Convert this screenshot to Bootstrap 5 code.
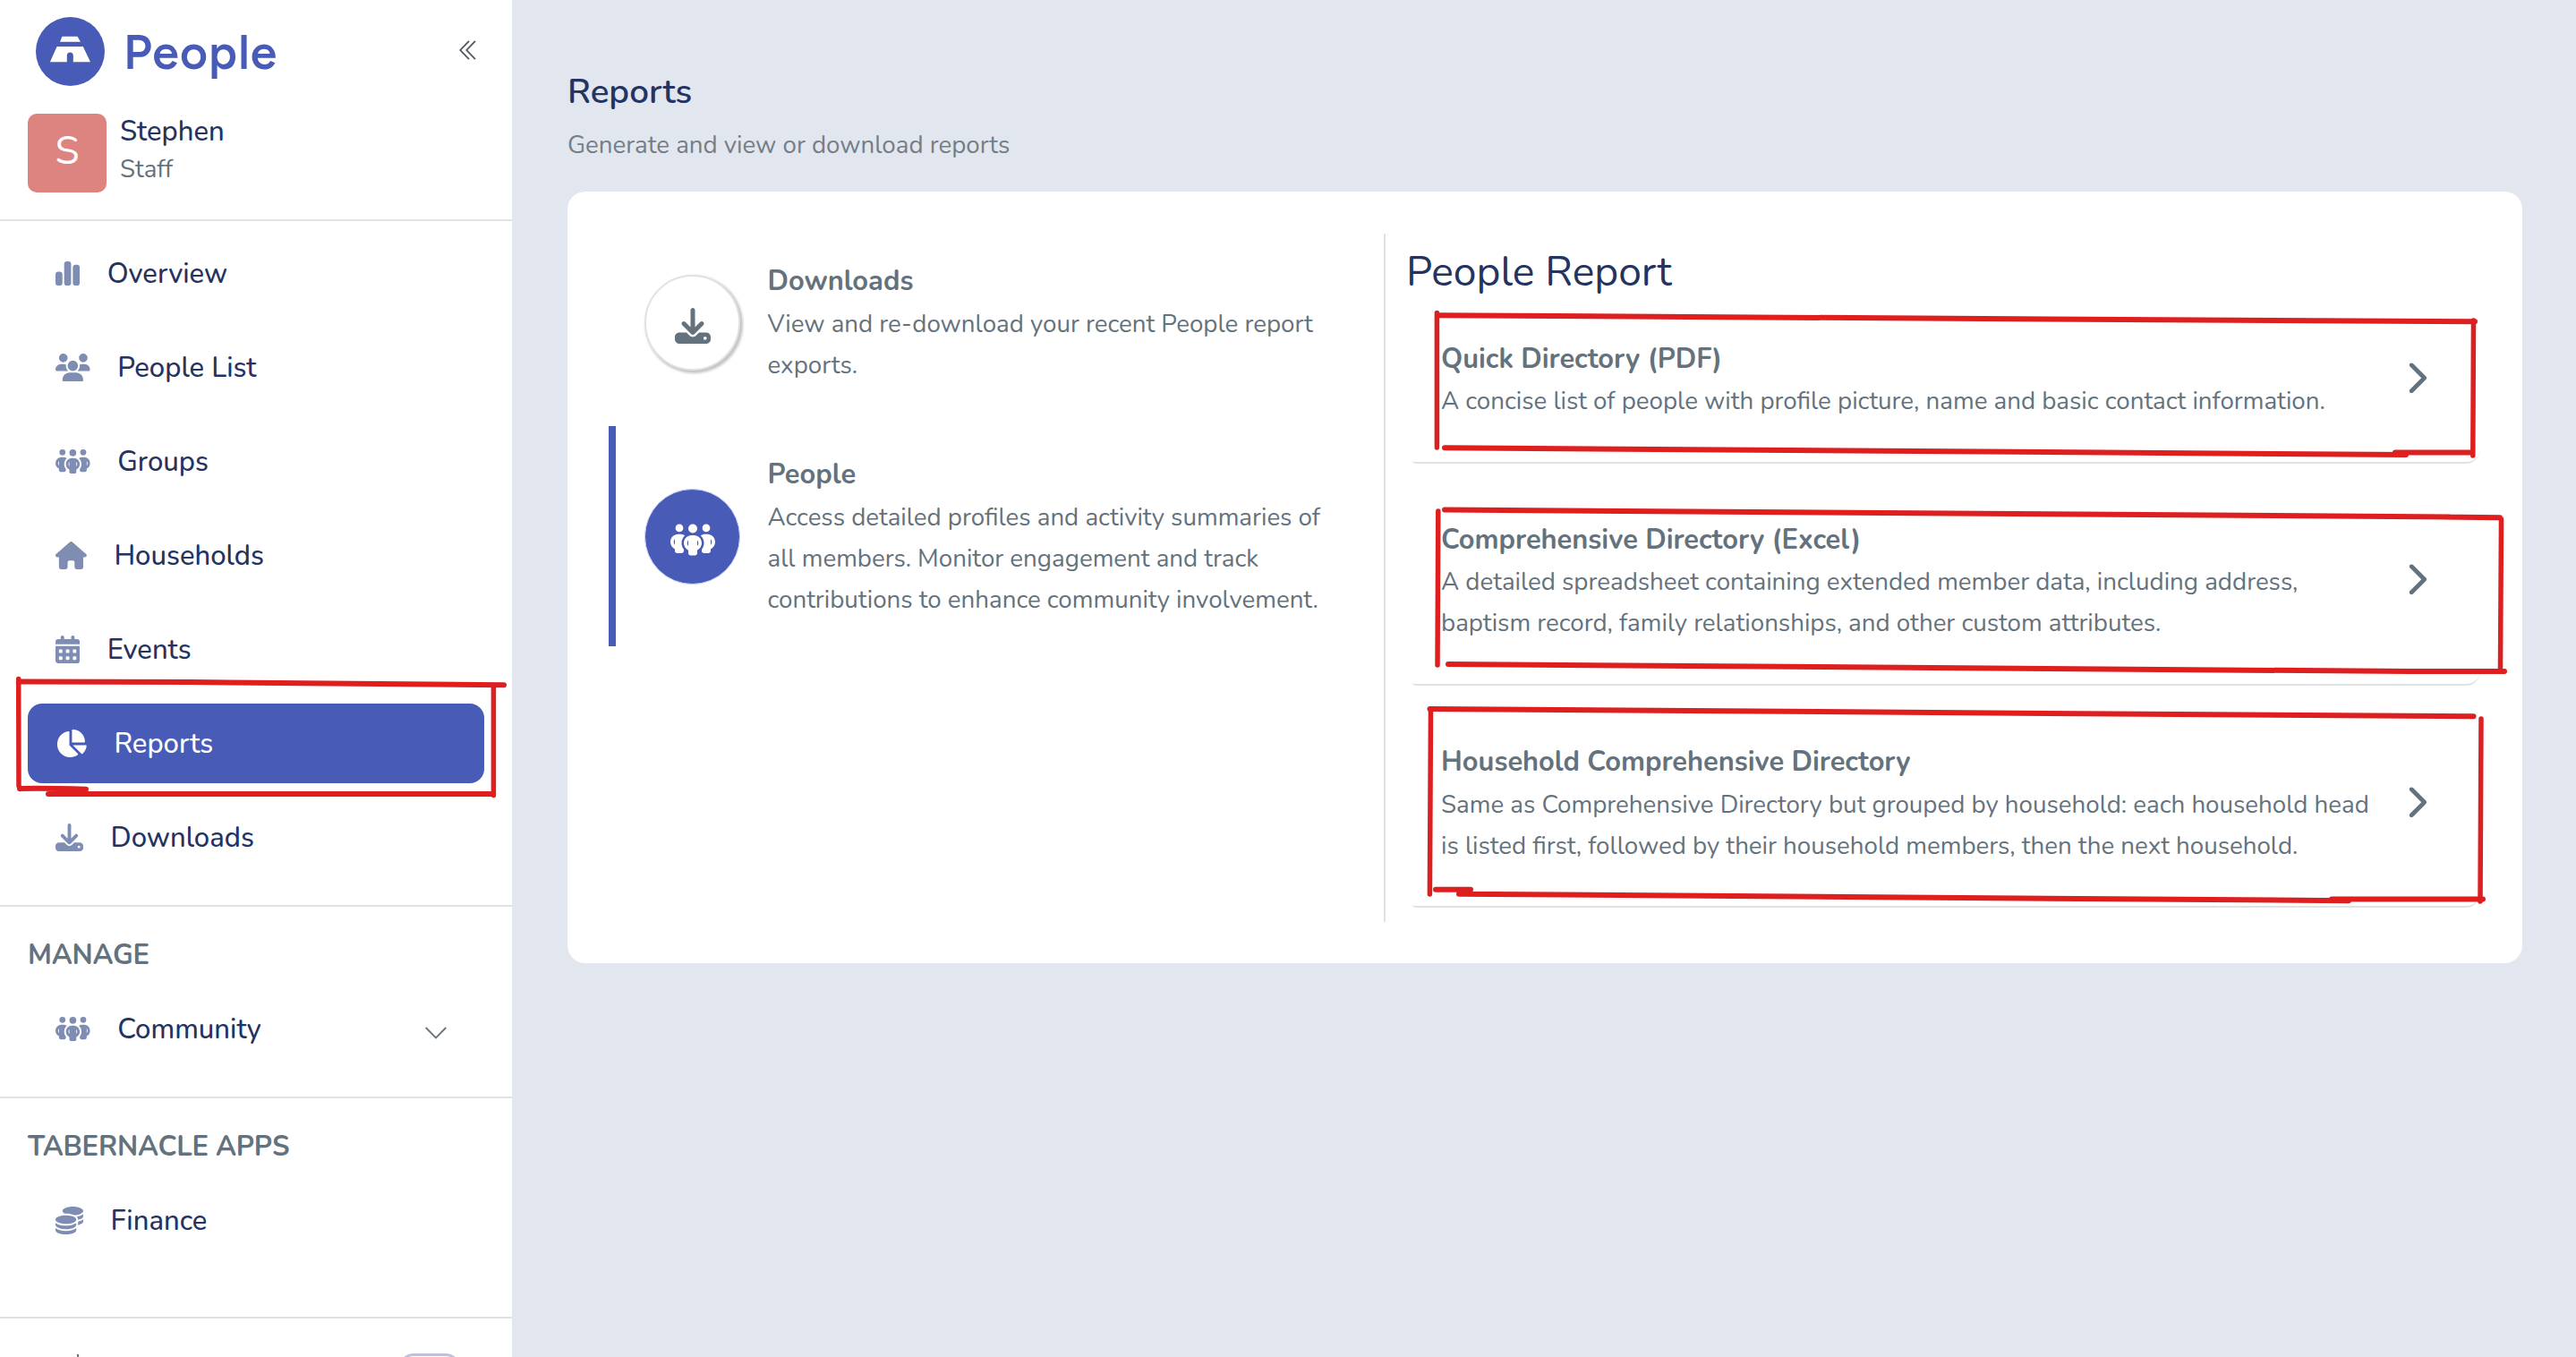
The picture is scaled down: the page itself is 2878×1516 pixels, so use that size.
<!DOCTYPE html>
<html lang="en">
<head>
<meta charset="utf-8">
<meta name="viewport" content="width=device-width, initial-scale=1">
<title>Reports</title>
<link href="https://cdn.jsdelivr.net/npm/bootstrap@5.3.0/dist/css/bootstrap.min.css" rel="stylesheet">
<script src="https://cdn.jsdelivr.net/npm/bootstrap@5.3.0/dist/js/bootstrap.bundle.min.js"></script>
<style>
  :root{--brand:#485bb7;--ink:#24335f;--slate:#64727d;--tint:#7f8db3;--line:#dfe1e3}
  body{font-family:Nunito,Lato,sans-serif;font-size:31px;color:var(--slate);background:#e2e6ef}
  .app{height:1516px}
  .sidebar{width:572px}
  .side-top{height:247px;border-bottom:2px solid var(--line);padding:0 40px 0 31px}
  .brand-row{height:115px;padding-left:9px}
  .brand-name{font-family:Figtree,Nunito,Lato,sans-serif;font-weight:600;font-size:53.5px;line-height:1;letter-spacing:1.1px;color:var(--brand);margin:2px 0 0 21px}
  .avatar{width:88px;height:88px;border-radius:10px;background:#dd8480;color:#fff;font-size:44px;line-height:84px}
  .who{line-height:40px;color:var(--ink);font-weight:500}
  .role{font-size:27.7px;line-height:44px}
  .side-group{padding:0 31px;border-bottom:2px solid var(--line)}
  .side-nav{gap:16px}
  .side-link{height:89px;border-radius:16px;padding:2px 30px 0 31px;gap:30.5px;color:var(--ink);font-weight:500;text-decoration:none}
  .side-link svg{height:31px;fill:var(--tint);margin-top:-2px}
  .side-link.current{background:var(--brand);color:#fff}
  .side-link.current svg{fill:#fff}
  .side-label{height:40px;line-height:41px;font-weight:700;letter-spacing:-.2px;margin-bottom:18px}
  .switch{width:68px;height:36px;border:3px solid #bfc0da;border-radius:16px}
  .page{padding:0 60px 0 62px}
  .page-title{font-size:38.6px;font-weight:600;line-height:50px;color:var(--ink);margin:78px 0 0}
  .page-sub{font-size:27.7px;line-height:40px;color:#757e86;margin:14px 0 32px}
  .panel{border-radius:20px;padding:47px 47px 46px 46px}
  .pick{width:866px;gap:15px}
  .pick-item{padding:30px 0 30.5px 32px;border-left:8px solid transparent}
  .pick-item.current{border-left-color:var(--brand);padding-top:31px;padding-bottom:29.5px}
  .disc{width:107px;height:107px;border:2px solid #e2e2e2;background:#fff;margin-right:30.500px;box-shadow:2px 2px 3px 1px #c4c4c4}
  .disc svg{height:40px;fill:var(--slate);margin-top:7px}
  .current .disc{background:var(--brand);border-color:#cdd5f6;border-width:1px;box-shadow:none}
  .current .disc svg{fill:#fff}
  .item-title{font-size:30.8px;font-weight:700;line-height:46px;margin:0 0 1.5px}
  .item-text{font-size:27.7px;line-height:46px;margin:0;white-space:nowrap}
  .detail{border-left:2px solid var(--line);padding:15.5px 0 15.6px}
  .detail-title{font-size:46.2px;font-weight:400;line-height:54px;color:var(--ink);margin:0 0 -15px 23px}
  .report{margin-left:30px;padding:62px 60px 44.8px 32px;border-bottom:2px solid var(--line);border-radius:0 0 16px 4px}
  .report svg{height:38.5px;fill:var(--slate);margin-top:-4px;flex-shrink:0}
  .marker{left:0;top:0;pointer-events:none}
</style>
</head>
<body class="m-0 overflow-hidden">
<svg class="d-none">
  <symbol id="i-chart" viewBox="0 0 448 512"><path d="M160 80c0-26.5 21.500-48 48-48h32c26.500 0 48 21.500 48 48V432c0 26.500-21.500 48-48 48H208c-26.500 0-48-21.500-48-48V80zM0 272c0-26.500 21.500-48 48-48H80c26.500 0 48 21.500 48 48V432c0 26.500-21.500 48-48 48H48c-26.500 0-48-21.500-48-48V272zM368 96h32c26.500 0 48 21.500 48 48V432c0 26.500-21.500 48-48 48H368c-26.500 0-48-21.500-48-48V144c0-26.500 21.500-48 48-48z"/></symbol>
  <symbol id="i-users" viewBox="0 0 640 512"><path d="M144 0a80 80 0 1 1 0 160A80 80 0 1 1 144 0zM512 0a80 80 0 1 1 0 160A80 80 0 1 1 512 0zM0 298.700C0 239.800 47.800 192 106.700 192h42.700c15.900 0 31 3.500 44.600 9.700c-1.300 7.200-1.900 14.700-1.900 22.300c0 38.200 16.800 72.500 43.300 96H21.300C9.600 320 0 310.400 0 298.700zM405.300 320h-.7c26.600-23.500 43.300-57.800 43.300-96c0-7.600-.7-15-1.900-22.300c13.600-6.300 28.700-9.700 44.600-9.700h42.700C592.200 192 640 239.800 640 298.700c0 11.800-9.600 21.300-21.300 21.300H405.300zM224 224a96 96 0 1 1 192 0 96 96 0 1 1 -192 0zM128 485.300C128 411.700 187.700 352 261.300 352H378.700C452.300 352 512 411.700 512 485.300c0 14.700-11.900 26.700-26.700 26.700H154.700c-14.700 0-26.700-11.900-26.700-26.700z"/></symbol>
  <symbol id="i-group" viewBox="0 0 640 512"><path d="M72 88a56 56 0 1 1 112 0A56 56 0 1 1 72 88zM64 245.700C54 256.900 48 271.800 48 288s6 31.100 16 42.300V245.700zm144.400-49.300C178.700 222.700 160 261.200 160 304c0 34.300 12 65.800 32 90.500V416c0 17.700-14.300 32-32 32H96c-17.700 0-32-14.300-32-32V389.200C26.200 371.200 0 332.700 0 288c0-61.900 50.100-112 112-112h32c24 0 46.200 7.500 64.400 20.300zM448 416V394.500c20-24.700 32-56.200 32-90.500c0-42.800-18.700-81.300-48.400-107.700C449.800 183.500 472 176 496 176h32c61.900 0 112 50.100 112 112c0 44.700-26.200 83.200-64 101.200V416c0 17.700-14.300 32-32 32H480c-17.700 0-32-14.300-32-32zm8-328a56 56 0 1 1 112 0A56 56 0 1 1 456 88zM576 245.700v84.700c10-11.300 16-26.100 16-42.300s-6-31.100-16-42.300zM320 32a64 64 0 1 1 0 128 64 64 0 1 1 0-128zM240 304c0 16.200 6 31 16 42.300V261.700c-10 11.300-16 26.100-16 42.300zm144-42.300v84.700c10-11.300 16-26.100 16-42.300s-6-31.100-16-42.300zM448 304c0 44.700-26.200 83.200-64 101.200V448c0 17.700-14.300 32-32 32H288c-17.700 0-32-14.300-32-32V405.200c-37.800-18-64-56.500-64-101.200c0-61.900 50.100-112 112-112h32c61.900 0 112 50.100 112 112z"/></symbol>
  <symbol id="i-house" viewBox="0 0 576 512"><path d="M575.800 255.500c0 18-15 32.100-32 32.100h-32l.7 160.200c0 2.700-.2 5.400-.5 8.100V472c0 22.100-17.900 40-40 40H392c-22.100 0-40-17.900-40-40V384c0-17.700-14.300-32-32-32H256c-17.700 0-32 14.300-32 32v88c0 22.100-17.900 40-40 40H104c-22.100 0-40-17.900-40-40V287.600H32c-18 0-32-14-32-32.100c0-9 3-17 10-24L266.400 8c7-7 15-8 22-8s15 2 21 7L564.800 231.500c8 7 12 15 11 24z"/></symbol>
  <symbol id="i-calendar" viewBox="0 0 448 512"><path d="M128 0c17.700 0 32 14.300 32 32V64H288V32c0-17.700 14.300-32 32-32s32 14.300 32 32V64h48c26.500 0 48 21.500 48 48v48H0V112C0 85.500 21.500 64 48 64H96V32c0-17.700 14.300-32 32-32zM0 192H448V464c0 26.500-21.500 48-48 48H48c-26.500 0-48-21.500-48-48V192zm64 80v32c0 8.800 7.200 16 16 16h32c8.800 0 16-7.200 16-16V272c0-8.800-7.200-16-16-16H80c-8.800 0-16 7.200-16 16zm128 0v32c0 8.800 7.200 16 16 16h32c8.800 0 16-7.200 16-16V272c0-8.800-7.200-16-16-16H208c-8.800 0-16 7.200-16 16zm144-16c-8.800 0-16 7.200-16 16v32c0 8.800 7.200 16 16 16h32c8.800 0 16-7.200 16-16V272c0-8.800-7.200-16-16-16H336zM64 400v32c0 8.800 7.200 16 16 16h32c8.800 0 16-7.200 16-16V400c0-8.800-7.200-16-16-16H80c-8.800 0-16 7.200-16 16zm144-16c-8.800 0-16 7.200-16 16v32c0 8.800 7.200 16 16 16h32c8.800 0 16-7.200 16-16V400c0-8.800-7.200-16-16-16H208zm112 16v32c0 8.800 7.200 16 16 16h32c8.800 0 16-7.200 16-16V400c0-8.800-7.200-16-16-16H336c-8.800 0-16 7.200-16 16z"/></symbol>
  <symbol id="i-pie" viewBox="0 0 576 512"><path d="M304 240V16.600c0-9 7-16.600 16-16.600C443.700 0 544 100.300 544 224c0 9-7.600 16-16.600 16H304zM32 272C32 150.700 122.100 50.300 239 34.300c9.200-1.300 17 6.100 17 15.400V288L412.500 444.500c6.700 6.700 6.200 17.700-1.500 23.100C371.800 495.600 323.800 512 272 512C139.500 512 32 404.600 32 272zm526.400 16c9.300 0 16.600 7.800 15.400 17c-7.700 55.900-34.600 105.600-73.900 142.300c-6 5.600-15.400 5.200-21.200-.7L320 288H558.400z"/></symbol>
  <symbol id="i-download" viewBox="0 0 512 512"><path d="M288 32c0-17.700-14.300-32-32-32s-32 14.300-32 32V274.700l-73.400-73.400c-12.500-12.500-32.800-12.500-45.300 0s-12.500 32.800 0 45.300l128 128c12.500 12.500 32.800 12.500 45.300 0l128-128c12.500-12.500 12.500-32.800 0-45.300s-32.800-12.500-45.300 0L288 274.700V32zM64 352c-35.300 0-64 28.700-64 64v32c0 35.300 28.700 64 64 64H448c35.300 0 64-28.700 64-64V416c0-35.300-28.700-64-64-64H346.500l-45.300 45.300c-25 25-65.500 25-90.500 0L165.500 352H64zm368 56a24 24 0 1 1 0 48 24 24 0 1 1 0-48z"/></symbol>
  <symbol id="i-coins" viewBox="0 0 512 512"><path d="M512 80c0 18-14.300 34.600-38.400 48c-29.100 16.100-72.500 27.500-122.300 30.900c-3.700-1.800-7.400-3.500-11.300-5C300.600 137.400 248.200 128 192 128c-8.300 0-16.400 .2-24.500 .6l-1.100-.6C142.300 114.600 128 98 128 80c0-44.200 86-80 192-80S512 35.800 512 80zM160.700 161.100c10.200-.7 20.700-1.100 31.300-1.100c62.200 0 117.400 12.300 152.500 31.400C369.300 204.900 384 221.700 384 240c0 4-.7 7.900-2.100 11.700c-4.600 13.200-17 25.300-35 35.500l-1.300 .7c-35 19.400-90.800 32-153.600 32c-59.600 0-112.900-11.300-148.200-29.100l-5.500-2.900C14.300 274.600 0 258 0 240c0-34.800 53.400-64.500 128-75.400c10.500-1.500 21.400-2.700 32.700-3.500zM416 240c0-21.900-10.600-39.900-24.100-53.400c28.300-4.400 54.200-11.400 76.200-20.500c16.300-6.800 31.500-15.200 43.900-25.500V176c0 19.300-16.500 37.100-43.800 50.900c-14.600 7.400-32.400 13.700-52.400 18.500c.1-1.800 .2-3.500 .2-5.300zm-32 96c0 18-14.300 34.600-38.400 48c-1.800 1-3.600 1.900-5.500 2.900C304.900 404.700 251.600 416 192 416c-62.800 0-118.600-12.600-153.600-32C14.300 370.600 0 354 0 336V300.600c12.500 10.300 27.600 18.700 43.900 25.500C83.400 342.600 135.800 352 192 352s108.600-9.400 148.100-25.900c7.800-3.200 15.300-6.900 22.400-10.900c6.100-3.400 11.800-7.200 17.200-11.200l4.300-3.400V336zm32 0V278.100c19-4.200 36.500-9.500 52.100-16c16.300-6.800 31.500-15.200 43.900-25.500V272c0 10.500-5 21-14.900 30.900c-16.300 16.300-45 29.700-81.300 38.400c.1-1.700 .2-3.500 .2-5.300zM192 448c56.200 0 108.600-9.400 148.100-25.900c16.300-6.800 31.500-15.200 43.900-25.500V432c0 44.200-86 80-192 80S0 476.200 0 432V396.600c12.500 10.300 27.600 18.700 43.900 25.500C83.400 438.600 135.800 448 192 448z"/></symbol>
  <symbol id="i-right" viewBox="0 0 320 512"><path d="M310.600 233.400c12.500 12.500 12.500 32.800 0 45.300l-192 192c-12.500 12.500-32.800 12.500-45.300 0s-12.500-32.800 0-45.300L242.700 256 73.400 86.600c-12.500-12.500-12.500-32.800 0-45.300s32.800-12.500 45.300 0l192 192z"/></symbol>
</svg>

<div class="app d-flex position-relative overflow-hidden">
  <aside class="sidebar bg-white flex-shrink-0 overflow-hidden">
    <div class="side-top">
      <div class="brand-row d-flex align-items-center">
        <svg width="77" height="77" viewBox="0 0 77 77"><circle cx="38.500" cy="38.500" r="38.500" fill="#485bb7"/><path fill="#fff" d="M29.500 21.700h17l3.500 6h-23zM23.600 33h29.200l8.200 17.300H41.800V43a3.500 3.500 0 0 0-7 0v7.300H15.900z"/></svg>
        <span class="brand-name">People</span>
        <svg class="ms-auto mb-1" width="19" height="22" viewBox="0 0 19 22" fill="none" stroke="#505860" stroke-width="1.800"><path d="M11 .8 1.300 11 11 21.200M18 .8 8.300 11 18 21.200"/></svg>
      </div>
      <div class="d-flex mt-2 pt-1">
        <div class="avatar text-center">S</div>
        <div style="margin-left:15px">
          <div class="who">Stephen</div>
          <div class="role">Staff</div>
        </div>
      </div>
    </div>
    <div class="side-group" style="padding-top:14px;padding-bottom:31px">
      <nav class="side-nav d-flex flex-column">
        <a class="side-link d-flex align-items-center" href="#"><svg viewBox="0 0 448 512"><use href="#i-chart"/></svg>Overview</a>
        <a class="side-link d-flex align-items-center" href="#"><svg viewBox="0 0 640 512"><use href="#i-users"/></svg>People List</a>
        <a class="side-link d-flex align-items-center" href="#"><svg viewBox="0 0 640 512"><use href="#i-group"/></svg>Groups</a>
        <a class="side-link d-flex align-items-center" href="#"><svg viewBox="0 0 576 512"><use href="#i-house"/></svg>Households</a>
        <a class="side-link d-flex align-items-center" href="#"><svg viewBox="0 0 448 512"><use href="#i-calendar"/></svg>Events</a>
        <a class="side-link current d-flex align-items-center" href="#"><svg viewBox="0 0 576 512"><use href="#i-pie"/></svg>Reports</a>
        <a class="side-link d-flex align-items-center" href="#"><svg viewBox="0 0 512 512"><use href="#i-download"/></svg>Downloads</a>
      </nav>
    </div>
    <div class="side-group" style="padding-top:34px;padding-bottom:31px">
      <div class="side-label">MANAGE</div>
      <a class="side-link d-flex align-items-center" href="#"><svg viewBox="0 0 640 512"><use href="#i-group"/></svg>Community
        <span class="ms-auto me-2 d-flex pt-2 pe-1"><svg style="width:24px;height:14px;fill:none" viewBox="0 0 24 14" stroke="#6b7278" stroke-width="1.800"><path d="M.7 1 12 12.500 23.300 1"/></svg></span></a>
    </div>
    <div class="side-group" style="padding-top:34px;padding-bottom:63px">
      <div class="side-label">TABERNACLE APPS</div>
      <a class="side-link d-flex align-items-center" href="#"><svg viewBox="0 0 512 512"><use href="#i-coins"/></svg>Finance</a>
    </div>
    <div class="d-flex justify-content-between" style="padding:39px 58px 0 70px">
      <svg width="34" height="34" viewBox="0 0 34 34" fill="none" stroke="#64727d" stroke-width="2"><path d="M17 1v5M17 28v5M1 17h5M28 17h5"/><circle cx="17" cy="17" r="7"/></svg>
      <span class="switch"></span>
    </div>
  </aside>

  <main class="page flex-grow-1">
    <h1 class="page-title">Reports</h1>
    <p class="page-sub">Generate and view or download reports</p>
    <section class="panel bg-white d-flex">
      <div class="pick d-flex flex-column flex-shrink-0">
        <div class="pick-item d-flex align-items-center">
          <div class="disc rounded-circle d-flex align-items-center justify-content-center flex-shrink-0"><svg viewBox="0 0 512 512"><use href="#i-download"/></svg></div>
          <div>
            <h2 class="item-title">Downloads</h2>
            <p class="item-text">View and re-download your recent People report<br>exports.</p>
          </div>
        </div>
        <div class="pick-item current d-flex align-items-center">
          <div class="disc rounded-circle d-flex align-items-center justify-content-center flex-shrink-0"><svg viewBox="0 0 640 512"><use href="#i-group"/></svg></div>
          <div>
            <h2 class="item-title">People</h2>
            <p class="item-text">Access detailed profiles and activity summaries of<br>all members. Monitor engagement and track<br>contributions to enhance community involvement.</p>
          </div>
        </div>
      </div>
      <div class="detail flex-grow-1">
        <h2 class="detail-title">People Report</h2>
        <div class="report d-flex align-items-center justify-content-between">
          <div>
            <h3 class="item-title">Quick Directory (PDF)</h3>
            <p class="item-text">A concise list of people with profile picture, name and basic contact information.</p>
          </div>
          <svg viewBox="0 0 320 512"><use href="#i-right"/></svg>
        </div>
        <div class="report d-flex align-items-center justify-content-between">
          <div>
            <h3 class="item-title">Comprehensive Directory (Excel)</h3>
            <p class="item-text">A detailed spreadsheet containing extended member data, including address,<br>baptism record, family relationships, and other custom attributes.</p>
          </div>
          <svg viewBox="0 0 320 512"><use href="#i-right"/></svg>
        </div>
        <div class="report d-flex align-items-center justify-content-between">
          <div>
            <h3 class="item-title">Household Comprehensive Directory</h3>
            <p class="item-text">Same as Comprehensive Directory but grouped by household: each household head<br>is listed first, followed by their household members, then the next household.</p>
          </div>
          <svg viewBox="0 0 320 512"><use href="#i-right"/></svg>
        </div>
      </div>
    </section>
  </main>

  <!-- freehand marker strokes laid over the page -->
  <svg class="marker position-absolute" width="2878" height="1516" viewBox="0 0 2878 1516" fill="none" stroke="#de1f20" stroke-width="6" stroke-linecap="round">
    <path stroke-width="5.500" d="M20.700 758.500 21 878l1.500 3.500M551.400 767v121.500M1605.400 349.500V500M2763.500 358l-.7 151M1606.800 571l-.8 172M2794.500 580l-1 166M1598.500 792l-1.100 207M2772 803l-1 204"/>
    <path d="M22 761.500l190 .5 351 3.200M22 881c24-.5 42-.2 74 .7M54 887h497M1606 352.300l1159 7M1614 500.200l1074 7.800M2676 505.600h86M1614 569.500l1123 8M2727 577.500l66 .8M1618 742l1075 8h105M1597.500 792l1166 8.300M1604 993.700h39M1630 998.700l994 7.500M2605 1004.500h169"/>
  </svg>
</div>
</body>
</html>
